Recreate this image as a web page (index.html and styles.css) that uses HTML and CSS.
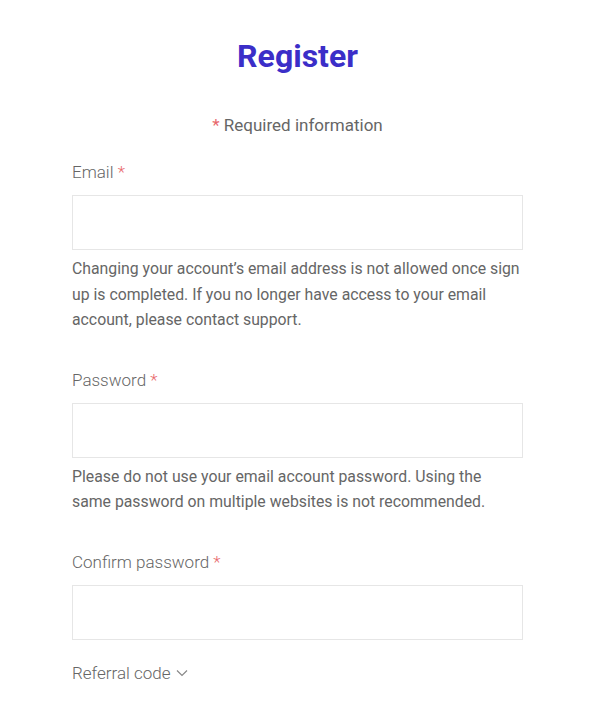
FILE: index.html
```html
<!DOCTYPE html>
<html>
<head>
<meta charset="utf-8">
<link rel="stylesheet" href="styles.css">
</head>
<body>
<main class="page">
  <h1 class="title">Register</h1>
  <p class="required-note"><span class="star">*</span> Required information</p>
  <form class="form">
    <div class="field">
      <label class="label">Email <span class="star">*</span></label>
      <input class="input" type="email">
      <p class="help">Changing your account’s email address is not allowed once sign up is completed. If you no longer have access to your email account, please contact support.</p>
    </div>
    <div class="field">
      <label class="label">Password <span class="star">*</span></label>
      <input class="input" type="password">
      <p class="help">Please do not use your email account password. Using the same password on multiple websites is not recommended.</p>
    </div>
    <div class="field field-last">
      <label class="label">Confirm password <span class="star">*</span></label>
      <input class="input" type="password">
    </div>
    <div class="referral">
      <span class="label">Referral code</span>
      <svg class="chevron" width="12" height="8" viewBox="0 0 12 8"><path d="M1 1.5 L6 6.5 L11 1.5" fill="none" stroke="#888" stroke-width="1.2"/></svg>
    </div>
  </form>
</main>
</body>
</html>
```
FILE: styles.css
```css
* { box-sizing: border-box; }
body {
  margin: 0;
  background: #fff;
  font-family: Roboto, "Noto Sans", sans-serif;
  color: #666;
}
.page {
  width: 451px;
  margin-left: 72px;
  padding-top: 36px;
}
.title {
  margin: 0;
  text-align: center;
  font-size: 32px;
  line-height: 40px;
  font-weight: 700;
  color: #3b2ec8;
}
.required-note {
  margin: 37px 0 0;
  text-align: center;
  font-size: 17px;
  line-height: 24px;
  color: #666;
}
.star { color: #e8676b; }
.form {
  margin-top: 23px;
  display: flex;
  flex-direction: column;
}
.field {
  display: flex;
  flex-direction: column;
  margin-bottom: 35px;
}
.field-last { margin-bottom: 21px; }
.label {
  display: block;
  font-size: 17px;
  line-height: 24px;
  font-weight: 300;
  color: #666;
}
.input {
  margin-top: 11px;
  height: 55px;
  width: 100%;
  border: 1px solid #e6e6e6;
  background: #fff;
  outline: none;
}
.help {
  margin: 6px 0 0;
  font-size: 15.8px;
  line-height: 25.5px;
  color: #666;
}
.referral {
  display: flex;
  align-items: center;
  gap: 5px;
}
.chevron { margin-top: 1px; }
```
